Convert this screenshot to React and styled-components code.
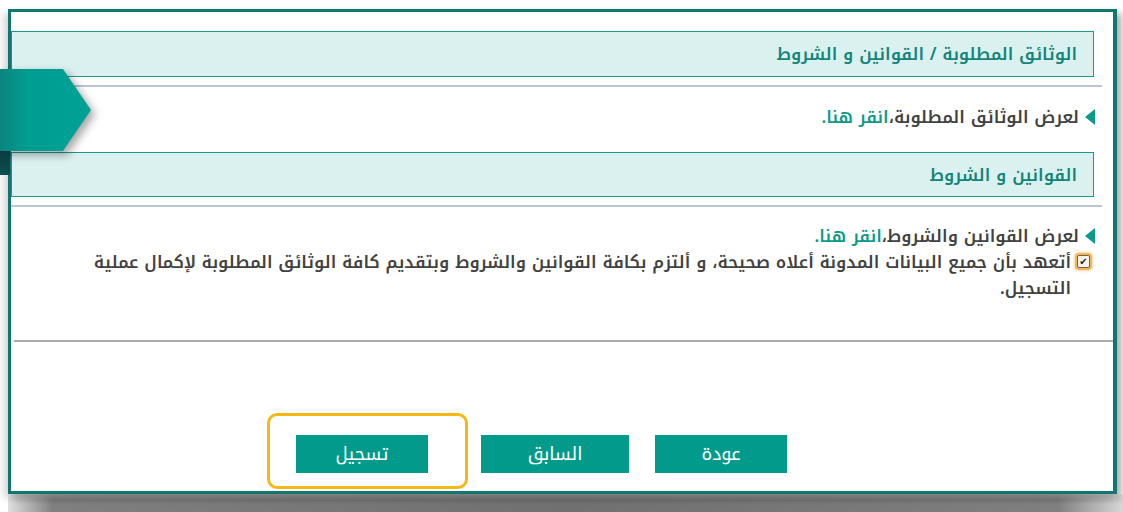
import React from "react";
import styled, { createGlobalStyle } from "styled-components";

const GlobalStyle = createGlobalStyle`
  html, body {
    margin: 0;
    padding: 0;
    background: #ffffff;
  }
  body {
    font-family: "Noto Kufi Arabic", "Noto Sans Arabic", "DejaVu Sans", sans-serif;
  }
`;

const Page = styled.div`
  position: relative;
  width: 1123px;
  height: 512px;
  overflow: hidden;
  box-sizing: border-box;
  padding: 9px 6px 0 8px;
  background: #ffffff;
`;

const Frame = styled.div`
  position: relative;
  height: 485px;
  box-sizing: border-box;
  border: 3px solid #127670;
  border-right-width: 4px;
  background: #ffffff;
  direction: rtl;
  box-shadow: -5px 4px 7px rgba(0, 0, 0, 0.14), 5px 4px 7px rgba(0, 0, 0, 0.3);

  &::after {
    content: "";
    position: absolute;
    left: -3px;
    right: -12px;
    top: calc(100% + 3px);
    height: 22px;
    background:
      linear-gradient(to bottom, rgba(255, 255, 255, 0.3), rgba(255, 255, 255, 0) 30%),
      linear-gradient(
        to right,
        rgba(0, 0, 0, 0.12) 0,
        rgba(0, 0, 0, 0.5) 4%,
        rgba(0, 0, 0, 0.56) 50%,
        rgba(0, 0, 0, 0.5) 94%,
        rgba(0, 0, 0, 0.14) 100%
      );
  }
`;

const Content = styled.div`
  padding: 19px 11px 0 0;
`;

const SectionHeader = styled.div`
  height: ${(p) => p.$h}px;
  margin-right: 8px;
  box-sizing: border-box;
  display: flex;
  align-items: center;
  padding-right: 16px;
  border: 1px solid #1b9a8e;
  background: #dbf1ef;
  color: #13847a;
  font-size: 17px;
  font-weight: 600;
`;

const Divider = styled.div`
  height: 2px;
  margin-top: 8px;
  background: #bac5d6;
`;

const Block = styled.div`
  padding: ${(p) => p.$pad};
  color: #414141;
  font-size: 17px;
  font-weight: 600;
  line-height: 26px;
`;

const Line = styled.div`
  display: flex;
  align-items: ${(p) => (p.$top ? "flex-start" : "center")};
  gap: ${(p) => p.$gap}px;
  padding-right: ${(p) => p.$indent}px;
`;

const Bullet = styled.span`
  flex: none;
  width: 0;
  height: 0;
  border-top: 8px solid transparent;
  border-bottom: 8px solid transparent;
  border-right: 10px solid #0c9a8c;
`;

const Link = styled.span`
  color: #0b9a8a;
`;

const CheckBox = styled.span`
  flex: none;
  width: 13px;
  height: 13px;
  margin-top: 6px;
  box-sizing: border-box;
  border: 1px solid #6f6250;
  border-radius: 2px;
  background: #f7f4ef;
  box-shadow: 0 0 0 2px #f0b45a, 0 0 3px 3px rgba(240, 180, 90, 0.55);
  display: flex;
  align-items: center;
  justify-content: center;
  color: #1d1d1d;
  font-family: "DejaVu Sans", sans-serif;
  font-size: 10px;
  font-weight: 700;
  line-height: 1;
`;

const Label = styled.span`
  flex: 1;
`;

const FullDivider = styled.div`
  height: 2px;
  margin-left: 3px;
  background: #aaaaaa;
`;

const ButtonBar = styled.div`
  display: flex;
  padding: 93px 326px 0 0;
`;

const Button = styled.button`
  width: ${(p) => p.$w}px;
  height: 38px;
  margin-right: ${(p) => p.$gap || 0}px;
  border: none;
  background: #029b8b;
  color: #ffffff;
  font-family: inherit;
  font-size: 18px;
  font-weight: 400;
  cursor: pointer;
`;

const HighlightWrap = styled.div`
  position: relative;
  margin-right: 53px;
  display: flex;
`;

const Highlight = styled.span`
  position: absolute;
  top: -22px;
  bottom: -16px;
  left: -29px;
  right: -40px;
  border: 3px solid #f5b816;
  border-radius: 10px;
  pointer-events: none;
`;

const RibbonShadow = styled.div`
  position: absolute;
  left: 0;
  top: 69px;
  filter: drop-shadow(4px 4px 4px rgba(0, 0, 0, 0.35));
`;

const RibbonBody = styled.div`
  width: 91px;
  height: 82px;
  clip-path: polygon(0 0, 63px 0, 91px 41px, 63px 82px, 0 82px);
  background: linear-gradient(to right, #0a857d 0, #009d91 30%, #00a195 100%);
`;

const RibbonFold = styled.div`
  position: absolute;
  left: 0;
  top: 151px;
  width: 10px;
  height: 24px;
  background: linear-gradient(to bottom, #0b3b3e, #0c4e50);
`;

export default function App() {
  return (
    <>
      <GlobalStyle />
      <Page>
        <Frame>
          <Content>
            <SectionHeader $h={46}>الوثائق المطلوبة / القوانين و الشروط</SectionHeader>
            <Divider />
            <Block $pad="17px 0 22px 0">
              <Line $indent={7} $gap={6}>
                <Bullet />
                <span>
                  لعرض الوثائق المطلوبة،<Link>انقر هنا.</Link>
                </span>
              </Line>
            </Block>
            <SectionHeader $h={45}>القوانين و الشروط</SectionHeader>
            <Divider />
            <Block $pad="16px 0 39px 0">
              <Line $indent={7} $gap={6}>
                <Bullet />
                <span>
                  لعرض القوانين والشروط،<Link>انقر هنا.</Link>
                </span>
              </Line>
              <Line $indent={12} $gap={6} $top>
                <CheckBox>✔</CheckBox>
                <Label>
                  أتعهد بأن جميع البيانات المدونة أعلاه صحيحة، و ألتزم بكافة القوانين والشروط وبتقديم كافة الوثائق المطلوبة لإكمال عملية
                  <br />
                  التسجيل.
                </Label>
              </Line>
            </Block>
          </Content>
          <FullDivider />
          <ButtonBar>
            <Button $w={132}>عودة</Button>
            <Button $w={148} $gap={26}>السابق</Button>
            <HighlightWrap>
              <Button $w={132}>تسجيل</Button>
              <Highlight />
            </HighlightWrap>
          </ButtonBar>
        </Frame>
        <RibbonShadow>
          <RibbonBody />
        </RibbonShadow>
        <RibbonFold />
      </Page>
    </>
  );
}
